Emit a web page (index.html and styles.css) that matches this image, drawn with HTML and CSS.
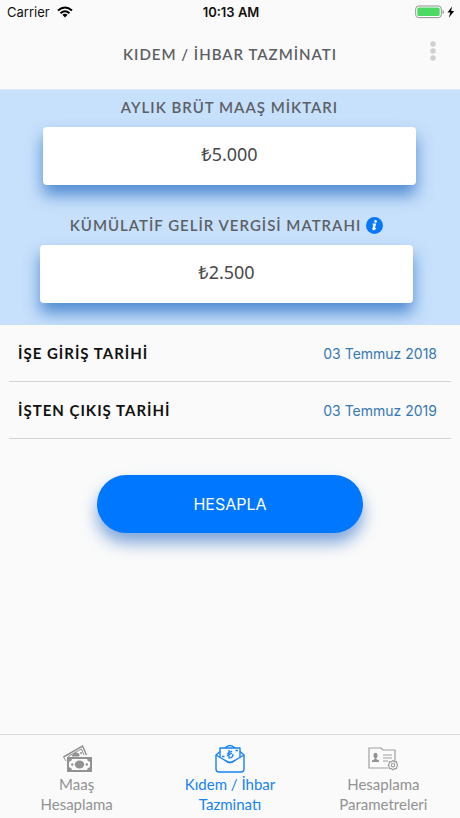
FILE: index.html
```html
<!DOCTYPE html>
<html lang="tr">
<head>
<meta charset="utf-8">
<meta name="viewport" content="width=device-width, initial-scale=1">
<title>Kıdem / İhbar Tazminatı</title>
<link rel="stylesheet" href="styles.css">
</head>
<body>
<div class="status">
  <div class="status-left">
    <span>Carrier</span>
    <svg width="16" height="12" viewBox="0 0 16 12" fill="none" stroke="#000" stroke-width="2"><path d="M1 4.6Q8-1.6 15 4.6M3.5 7.3Q8 3.3 12.5 7.3"/><path d="M5.4 8.8Q8 6.8 10.6 8.8L8 11.5Z" fill="#000" stroke="none"/></svg>
  </div>
  <span class="time">10:13 AM</span>
  <div class="status-right">
    <svg width="40" height="14" viewBox="0 0 40 14"><rect x=".7" y="1" width="25.6" height="11.6" rx="3" fill="#fff" stroke="#909090"/><rect x="2.3" y="2.6" width="22.4" height="8.4" rx="1.5" fill="#4cd964"/><path d="M27.6 5v4Q29 8.6 29 7T27.6 5Z" fill="#909090"/><path d="M37 1.5 32.5 7.5H35.3L33.8 12.7 39.2 6H36.2Z" fill="#000"/></svg>
  </div>
</div>
<header class="header">
  <h1>KIDEM / İHBAR TAZMİNATI</h1>
  <button class="more" type="button" aria-label="Menü"><svg width="8" height="20" viewBox="0 0 8 20" fill="#d0d0d0"><circle cx="4" cy="3" r="2.7"/><circle cx="4" cy="10" r="2.7"/><circle cx="4" cy="17" r="2.7"/></svg></button>
</header>
<main>
  <section class="panel">
    <div class="field">
      <label for="salary">AYLIK BRÜT MAAŞ MİKTARI</label>
      <input id="salary" type="text" value="₺5.000">
    </div>
    <div class="field field-tax">
      <div class="caption">
        <label for="tax">KÜMÜLATİF GELİR VERGİSİ MATRAHI</label>
        <button class="info" type="button" aria-label="Bilgi"><svg width="17" height="17" viewBox="0 0 17 17"><circle cx="8.5" cy="8.5" r="8.5" fill="#0878fa"/><circle cx="9.5" cy="4.4" r="1.3" fill="#fff"/><path d="M6.5 7.2H9.4L8 12.2Q9 12.2 10 11.2M8.1 7.4 6.9 11.8Q6.9 13 8.6 12.5" fill="none" stroke="#fff" stroke-width="1.2"/></svg></button>
      </div>
      <input id="tax" type="text" value="₺2.500">
    </div>
  </section>
  <div class="row"><span id="start">İŞE GİRİŞ TARİHİ</span><button class="date" type="button" aria-describedby="start">03 Temmuz 2018</button></div>
  <div class="row"><span id="end">İŞTEN ÇIKIŞ TARİHİ</span><button class="date" type="button" aria-describedby="end">03 Temmuz 2019</button></div>
  <button class="submit" type="button">HESAPLA</button>
</main>
<nav class="tabs">
  <a href="#maas">
    <svg width="30" height="30" viewBox="0 0 30 30" fill="none" stroke="#929292"><path d="M1.5 13 20.500 2 24.500 11" stroke-width="1.500"/><path d="M1.500 13 4 17M6 12.500 19.500 5 22 11"/><path d="M10 12Q12 8 15 9T17 12Z" fill="#929292"/><circle cx="19" cy="9" r="1" fill="#929292" stroke="none"/><rect x="5" y="13" width="25" height="15" fill="#929292" stroke="none"/><path d="M10 15H25Q25 17 28 18V23Q25 24 25 26H10Q10 24 7 23V18Q10 17 10 15Z" fill="#fafafa" stroke="none"/><ellipse cx="17.500" cy="20.500" rx="4.700" ry="4" fill="#929292" stroke="none"/><circle cx="10.200" cy="20.500" r="1.200" fill="#929292" stroke="none"/><circle cx="24.800" cy="20.500" r="1.200" fill="#929292" stroke="none"/></svg>
    <span>Maaş<br>Hesaplama</span>
  </a>
  <a href="#kidem" class="active" aria-current="page">
    <svg width="30" height="30" viewBox="0 0 30 30" fill="none" stroke="#1683f0" stroke-width="1.4" stroke-linejoin="round"><path d="M5 7.5 1 11V25Q1 28 4 28H26Q29 28 29 25V11L25 7.5"/><path d="M1 11 11 17Q15 20 19 17L29 11"/><path d="M5 13V4H25V13"/><path d="M10 4Q15-1 20 4M10 16Q15 21 20 16"/><path d="M14 6V14Q18 14 18 10M12 10 17 7M12 12 17 9M20.5 6.5H23M7 12.5H9.5" stroke-width="1.3"/></svg>
    <span>Kıdem / İhbar<br>Tazminatı</span>
  </a>
  <a href="#parametre">
    <svg width="30" height="30" viewBox="0 0 30 30" fill="none" stroke="#a0a0a0" stroke-width="1.2"><path d="M20 24H1V4H13L15 6H27V17"/><path d="M15 11H24M15 14H24M15 17H20"/><ellipse cx="7.5" cy="11.5" rx="2" ry="2.8" fill="#929292" stroke="none"/><path d="M6.8 13H8.2V15L11 16.5V18H4V16.5L6.8 15Z" fill="#929292" stroke="none"/><path d="m25 16.5 1.5 1.3 2-.1.3 2 1 1.5-1 1.5-.3 2-2-.1L25 26l-1.500-1.400-2 .1-.3-2-1-1.500 1-1.500.3-2 2 .1Z"/><circle cx="25" cy="21.2" r="1.7"/></svg>
    <span>Hesaplama<br>Parametreleri</span>
  </a>
</nav>
</body>
</html>
```
FILE: styles.css
```css
* { box-sizing: border-box; }
body {
  margin: 0;
  min-height: 100vh;
  display: flex;
  flex-direction: column;
  background: #fafafa;
  font-family: Lato, "Open Sans", sans-serif;
  color: #5c6065;
}
button { border: 0; padding: 0; background: none; font: inherit; color: inherit; }
svg { display: block; }
.status {
  display: grid;
  grid-template-columns: 1fr auto 1fr;
  align-items: center;
  height: 24px;
  padding: 0 5px 0 7px;
  font: 13px Inter, sans-serif;
  color: #111;
}
.status-left { display: flex; align-items: center; gap: 7px; }
.status-right { justify-self: end; }
.time { font-weight: 600; }
.header {
  display: grid;
  grid-template-columns: 24px 1fr 24px;
  align-items: center;
  height: 66px;
  padding: 0 15px 6px;
  border-bottom: 1px solid #dce6f6;
}
h1 {
  grid-column: 2;
  margin: 0;
  text-align: center;
  font-size: 15px;
  font-weight: 600;
  line-height: 20px;
  letter-spacing: 1px;
}
.more { display: grid; justify-content: center; padding-bottom: 6px; }
.panel {
  height: 235px;
  padding: 7px 44px 0 43px;
  overflow: hidden;
  background: #c7e0fb;
}
.field { display: flex; flex-direction: column; gap: 10px; }
.field-tax { margin: 30px 3px 0 -3px; }
.field label {
  text-align: center;
  font-size: 15px;
  font-weight: 600;
  line-height: 20px;
  letter-spacing: 1px;
}
.caption { display: flex; justify-content: center; align-items: center; gap: 5px; }
.field input {
  width: 100%;
  height: 58px;
  padding: 0 0 4px;
  border: 0;
  border-radius: 4px;
  background: #fff;
  box-shadow: 0 10px 16px #508bd2;
  color: #484848;
  font: 18px "Noto Sans", sans-serif;
  text-align: center;
}
.row {
  display: flex;
  justify-content: space-between;
  align-items: center;
  height: 57px;
  margin: 0 9px;
  padding: 0 14px 0 9px;
  border-bottom: 1px solid #d4d4d4;
  font-size: 15px;
  font-weight: 700;
  letter-spacing: 1px;
  color: #111;
}
.date { font: 14px Inter, sans-serif; color: #3678b4; }
.submit {
  display: block;
  width: 58%;
  height: 58px;
  margin: 36px auto 40px;
  border-radius: 29px;
  background: #0077ff;
  box-shadow: 0 10px 16px #7fa6da;
  color: #fff;
  font: 16px Inter, sans-serif;
}
.tabs {
  display: grid;
  grid-template-columns: repeat(3, 1fr);
  height: 84px;
  margin-top: auto;
  border-top: 1px solid #dadada;
}
.tabs a {
  display: flex;
  flex-direction: column;
  align-items: center;
  padding-top: 9px;
  color: #929292;
  font-size: 15px;
  line-height: 20px;
  text-align: center;
  text-decoration: none;
}
.tabs .active { color: #1683f0; }
```
